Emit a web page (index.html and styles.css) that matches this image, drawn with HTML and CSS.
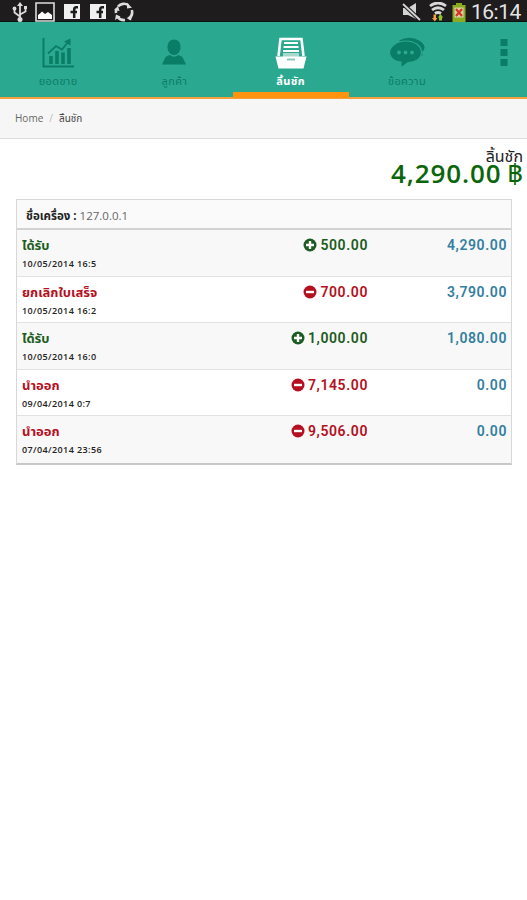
FILE: index.html
```html
<!DOCTYPE html>
<html lang="th">
<head>
    <meta charset="UTF-8">
    <meta name="viewport" content="width=device-width, initial-scale=1.0">
    <title>ลิ้นชัก</title>
    <link rel="stylesheet" href="styles.css">
</head>
<body>
    <svg class="defs" width="0" height="0">
        <symbol id="plus" viewBox="0 0 14 14">
            <circle cx="7" cy="7" r="6.5" fill="currentColor"/>
            <path d="M7 3v8M3 7h8" stroke="#fff" stroke-width="2.4"/>
        </symbol>
        <symbol id="minus" viewBox="0 0 14 14">
            <circle cx="7" cy="7" r="6.5" fill="currentColor"/>
            <path d="M3 7h8" stroke="#fff" stroke-width="2.4"/>
        </symbol>
        <symbol id="fb" viewBox="0 0 16 15">
            <path d="M0 0h16v15H0z" fill="#f0f0f0"/>
            <path d="M14 3.2h-1.700Q10.200 3.200 10.200 5.500V14M6.500 8h6.500" fill="none" stroke="#1c1c1c" stroke-width="2.500"/>
        </symbol>
    </svg>

    <div class="status">
        <svg class="usb" width="16" height="20" viewBox="0 0 16 20" fill="none" stroke="#ddd" stroke-width="1.800">
            <path d="M8 2v15M2.500 7v3.500L8 14.500M13.500 6v3.500L8 12.500"/>
            <path d="M8 0l3 4H5zM12 4h3v3h-3z" fill="#ddd" stroke="none"/>
            <circle cx="2.500" cy="6.500" r="1.900" fill="#ddd" stroke="none"/>
            <circle cx="8" cy="17.500" r="2.500" fill="#ddd" stroke="none"/>
        </svg>
        <svg class="photo" width="20" height="20" viewBox="0 0 20 20">
            <path d="M1 1h18v18H1z" fill="none" stroke="#ddd" stroke-width="1.600"/>
            <path d="M3 17v-4l2-1.500 2-2 3 2.500 3-2 4 3v4z" fill="#fff"/>
        </svg>
        <svg class="fb" width="16" height="15"><use href="#fb"/></svg>
        <svg class="fb" width="16" height="15"><use href="#fb"/></svg>
        <svg class="sync" width="20" height="20" viewBox="0 0 20 20">
            <path d="M4 4.500A8 8 0 0 1 14.500 3.200M17.800 8A8 8 0 0 1 14.500 16.800M11 18A8 8 0 0 1 3.500 14.700M2 11A8 8 0 0 1 2.500 7" fill="none" stroke="#ddd" stroke-width="2.600"/>
            <path d="M13 .8l5 5-5 .7zM18 14l-1 4.500-4.500-2.500zM1 18l1-5.500 4.500 2zM0 8l4-4 1.500 5z" fill="#ddd"/>
        </svg>
        <svg class="mute" width="19" height="20" viewBox="0 0 19 20">
            <path d="M1 6h5l8-5v16l-8-4H1z" fill="#d4d4d4"/>
            <path d="M1 2l17 16" stroke="#1c1c1c" stroke-width="4"/>
            <path d="M1 2l17 16" stroke="#d4d4d4" stroke-width="1.800"/>
        </svg>
        <svg class="wifi" width="20" height="20" viewBox="0 0 20 20">
            <path d="M2 4q8-6 16 0M4 8q6-4.500 12 0M7 11.500q3-2 6 0" fill="none" stroke="#d8d8d8" stroke-width="2.800"/>
            <path d="M5.500 12.500h2.500V16h1.500l-2.700 3.500L4 16h1.500z" fill="#f5a33a"/>
            <path d="M11 18.500v-3H9.800l2.700-3.500 2.700 3.500H14v3z" fill="#8bc52a"/>
        </svg>
        <svg class="battery" width="14" height="19" viewBox="0 0 14 19">
            <path d="M4 0h6v2h3.500v17H.5V2H4z" fill="#8aab22"/>
            <path d="M2.500 4.500h9v10h-9z" fill="#d9d3a0"/>
            <path d="M4 6l6 7M10 6l-6 7" stroke="#d8332a" stroke-width="2.200"/>
        </svg>
        <span class="clock">16:14</span>
    </div>

    <div class="nav">
        <a class="tab">
            <svg width="32" height="32" viewBox="0 0 32 32" fill="none" stroke="currentColor">
                <path d="M1.500 1v28.500H32" stroke-width="2"/>
                <path d="M9 27v-8M15 27V14M21 27V15.500M27 27V11" stroke-width="3.600"/>
                <path d="M6 16.500L14 9l6 3.500L26 5" stroke-width="1.800"/>
                <path d="M28.500 1.500v7L22 4.500z" fill="currentColor" stroke="none"/>
            </svg>
            <span>ยอดขาย</span>
        </a>
        <a class="tab">
            <svg width="32" height="32" viewBox="0 0 32 32" fill="currentColor">
                <path d="M16 2.500c4 0 6.500 3 6.500 7.500S19.500 18 16 18s-6.500-3.500-6.500-8S12 2.500 16 2.500z"/>
                <path d="M4 27.500l3.300-7q.5-1 2-1.500l2.500-1q4.200 3.500 8.400 0l2.500 1q1.500.5 2 1.500l3.300 7z"/>
            </svg>
            <span>ลูกค้า</span>
        </a>
        <a class="tab active">
            <svg width="32" height="32" viewBox="0 0 32 32">
                <path d="M3.500 19L5.500 2h21l2 17" fill="none" stroke="#fff" stroke-width="2.600"/>
                <path d="M9 6h14M8.500 10h15M8 14h16" stroke="#fff" stroke-width="2"/>
                <path d="M8 16h16v4H8z" fill="#a9d9cc"/>
                <path d="M.5 19.500h31L28.500 31.500h-25z" fill="#fff"/>
                <path d="M12 22.500h8" stroke="#8bc9ba" stroke-width="2"/>
            </svg>
            <span>ลิ้นชัก</span>
        </a>
        <a class="tab">
            <svg width="36" height="32" viewBox="0 0 36 32">
                <path d="M10 3.500Q21-2 31 4q8 6 2 11l.5 4-5-2z" fill="currentColor"/>
                <path d="M16.500 4C26 4 32.500 9 32.500 15.500S26 25.500 19 25.500L12 31v-6C6 24.500.5 21 .5 15.500S7 4 16.500 4z" fill="currentColor" stroke="#2ba890" stroke-width="1.200"/>
                <g fill="#2ba890">
                    <circle cx="10" cy="15.500" r="1.900"/>
                    <circle cx="16.500" cy="15.500" r="1.900"/>
                    <circle cx="23" cy="15.500" r="1.900"/>
                </g>
            </svg>
            <span>ข้อความ</span>
        </a>
        <a class="more">
            <svg width="8" height="27" viewBox="0 0 8 27" fill="currentColor">
                <path d="M.5 0h7v7h-7zM.5 10h7v7h-7zM.5 20h7v7h-7z"/>
            </svg>
        </a>
    </div>

    <div class="breadcrumb">
        <span>Home</span><span class="sep">/</span><span class="current">ลิ้นชัก</span>
    </div>

    <div class="summary">
        <div class="label">ลิ้นชัก</div>
        <div class="total">4,290.00 <span class="baht">฿</span></div>
    </div>

    <div class="panel">
        <div class="panel-head"><b>ชื่อเครื่อง :</b> <span>127.0.0.1</span></div>
        <div class="row in">
            <div class="name"><b>ได้รับ</b><small>10/05/2014 16:5</small></div>
            <div class="amount"><svg width="14" height="14"><use href="#plus"/></svg><span>500.00</span></div>
            <div class="balance">4,290.00</div>
        </div>
        <div class="row out">
            <div class="name"><b>ยกเลิกใบเสร็จ</b><small>10/05/2014 16:2</small></div>
            <div class="amount"><svg width="14" height="14"><use href="#minus"/></svg><span>700.00</span></div>
            <div class="balance">3,790.00</div>
        </div>
        <div class="row in">
            <div class="name"><b>ได้รับ</b><small>10/05/2014 16:0</small></div>
            <div class="amount"><svg width="14" height="14"><use href="#plus"/></svg><span>1,000.00</span></div>
            <div class="balance">1,080.00</div>
        </div>
        <div class="row out">
            <div class="name"><b>นำออก</b><small>09/04/2014 0:7</small></div>
            <div class="amount"><svg width="14" height="14"><use href="#minus"/></svg><span>7,145.00</span></div>
            <div class="balance">0.00</div>
        </div>
        <div class="row out">
            <div class="name"><b>นำออก</b><small>07/04/2014 23:56</small></div>
            <div class="amount"><svg width="14" height="14"><use href="#minus"/></svg><span>9,506.00</span></div>
            <div class="balance">0.00</div>
        </div>
    </div>
</body>
</html>
```
FILE: styles.css
```css
* {
    box-sizing: border-box;
}
body {
    margin: 0;
    font-family: "Open Sans", "Noto Sans", "Noto Sans Thai", sans-serif;
    background-color: #fff;
    color: #333;
    overflow: hidden;
}
svg {
    display: block;
    flex: none;
}
.defs {
    position: absolute;
}
.status {
    display: flex;
    height: 22px;
    padding: 2px 7px 0 12px;
    background-color: #1e1c1c;
    border-bottom: 1px solid #07140f;
}
.photo { margin-left: 7px; }
.fb { margin: 2px 0 0 9px; }
.fb + .fb { margin-left: 10px; }
.sync { margin-left: 8px; }
.mute { margin-left: auto; }
.wifi { margin-left: 7px; }
.battery { margin: 1px 5px 0 4px; }
.clock {
    width: 49px;
    font: 21px/20px Roboto, sans-serif;
    color: #e4e4e4;
    white-space: nowrap;
    letter-spacing: -0.5px;
}
.nav {
    display: flex;
    height: 77px;
    background-color: #2ba890;
    border-bottom: 2px solid #f5a03a;
    color: #0a7d67;
}
.tab {
    display: flex;
    flex-direction: column;
    align-items: center;
    width: 116.3px;
    height: 76px;
    padding-top: 15px;
    font-size: 11px;
    line-height: 16px;
    letter-spacing: 0.4px;
}
.tab span {
    margin-top: 4px;
}
.tab.active {
    color: #fff;
    font-weight: bold;
    border-bottom: 6px solid #ff9310;
}
.more {
    margin: 17px 0 0 35px;
}
.breadcrumb {
    height: 40px;
    padding-left: 15px;
    background-color: #f6f6f6;
    border-bottom: 1px solid #ddd;
    font-size: 10px;
    line-height: 39px;
    color: #666;
}
.sep {
    margin: 0 6px;
    color: #bbb;
}
.current {
    color: #444;
}
.summary {
    height: 60px;
    padding: 8px 4px 0 0;
    text-align: right;
}
.label {
    font-size: 16px;
    line-height: 18px;
    color: #222;
}
.total {
    font-size: 26px;
    font-weight: 600;
    line-height: 26px;
    margin-top: -5px;
    letter-spacing: 0.9px;
    color: #0b660b;
}
.baht {
    font-size: 27px;
    font-weight: 400;
    letter-spacing: 0;
    margin-left: -2px;
}
.panel {
    width: 496px;
    margin-left: 16px;
    border: 1px solid #d8d8d8;
    border-bottom: 2px solid #c8c8c8;
}
.panel-head {
    height: 30px;
    padding-left: 9px;
    background-color: #fafafa;
    border-bottom: 2px solid #d2d2d2;
    font-size: 11.5px;
    line-height: 31px;
    color: #666;
}
.panel-head b {
    color: #222;
}
.row {
    display: grid;
    grid-template-columns: 170px 176px 139px;
    height: 46.5px;
    padding: 6px 0 0 5px;
    border-bottom: 1px solid #e2e2e2;
    font-size: 14px;
    line-height: 19px;
}
.row:nth-child(even) {
    background-color: #f8f8f8;
}
.row:last-child {
    border-bottom: none;
}
.name b, .name small {
    display: block;
    white-space: nowrap;
}
.name b {
    font-size: 13px;
}
.name small {
    font: 600 9px/18px "Open Sans", sans-serif;
    letter-spacing: 0.4px;
    color: #222;
}
.amount, .balance {
    font-family: Roboto, sans-serif;
    font-weight: 600;
    letter-spacing: 0.6px;
}
.amount {
    display: flex;
    justify-content: flex-end;
    gap: 3px;
}
.amount svg {
    margin-top: 2px;
}
.balance {
    text-align: right;
    color: #34809f;
}
.in { color: #1c5c20; }
.out { color: #b50f22; }
```
